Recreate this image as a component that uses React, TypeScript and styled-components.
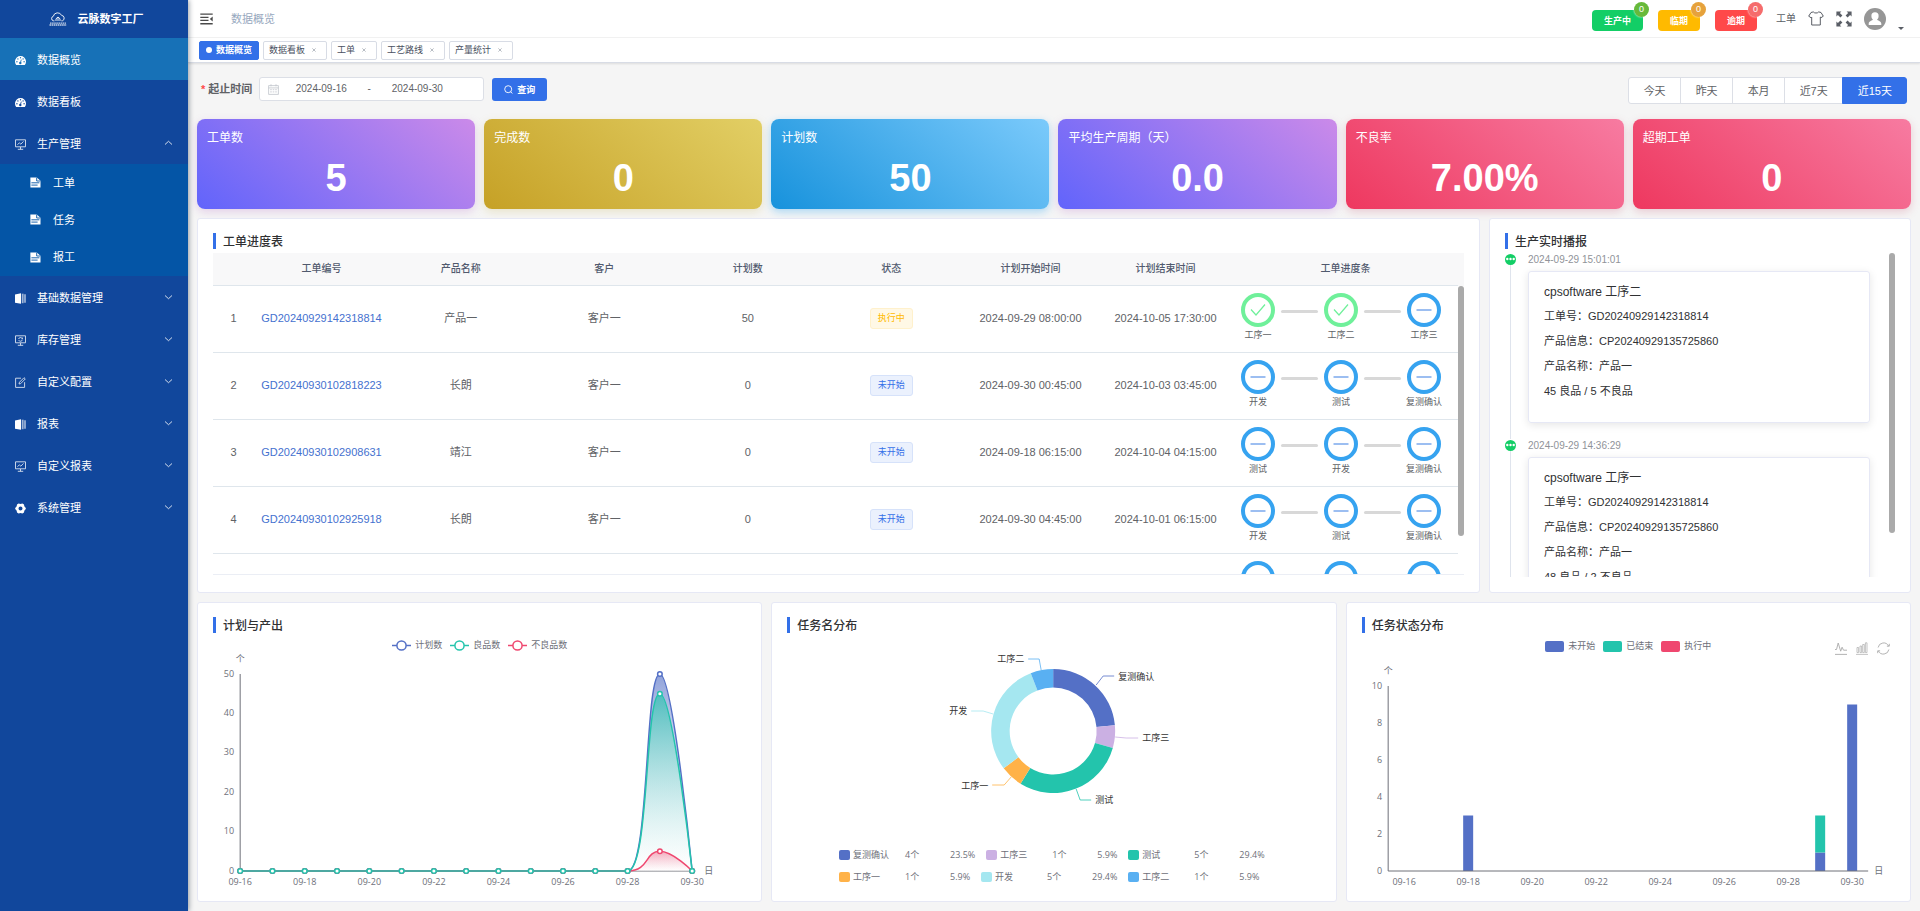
import React, { useState } from 'react';
import styled, { createGlobalStyle, css } from 'styled-components';

const GlobalStyle = createGlobalStyle`
  *, *::before, *::after { box-sizing: border-box; }
  body {
    margin: 0;
    background: #f5f5f5;
    color: #303133;
    font-family: "Liberation Sans", "Noto Sans CJK SC", sans-serif;
    font-size: 11px;
    line-height: 16px;
  }
  button, input { font: inherit; color: inherit; }
  button { cursor: pointer; }
  a { text-decoration: none; color: inherit; }
`;

const CHART_FONT = '"Open Sans", "Noto Sans CJK SC", sans-serif';

/* ---------- shell ---------- */

const Shell = styled.div`
  display: grid;
  grid-template-columns: 188px minmax(0, 1fr);
  min-height: 100vh;
`;

const Sidebar = styled.aside`
  position: relative;
  z-index: 2;
  background: #11479c;
  color: #fff;
  box-shadow: 1px 0 5px rgba(0, 21, 41, 0.4);
`;

const Brand = styled.div`
  display: flex;
  align-items: center;
  justify-content: center;
  gap: 11px;
  height: 38px;
  padding-left: 4px;
  font-size: 11px;
  font-weight: 700;
`;

const MenuRow = styled.a<{ $active?: boolean }>`
  display: flex;
  align-items: center;
  gap: 11px;
  height: 42px;
  padding: 2px 15px 0;
  background: ${(p) => (p.$active ? '#1771b7' : 'transparent')};
  svg { flex: none; }
`;

const MenuLabel = styled.span`
  flex: 1;
`;

const SubMenu = styled.div`
  display: grid;
  grid-auto-rows: 1fr;
  height: 112px;
  background: #0455a6;
`;

const SubRow = styled.a`
  display: flex;
  align-items: center;
  gap: 12px;
  padding-left: 30px;
`;

const Main = styled.div`
  display: flex;
  flex-direction: column;
  min-width: 0;
`;

const TopBar = styled.header`
  display: flex;
  align-items: center;
  height: 38px;
  padding: 0 16px 0 12px;
  background: #fff;
  border-bottom: 1px solid #f2f2f2;
`;

const PlainButton = styled.button`
  display: inline-flex;
  align-items: center;
  justify-content: center;
  padding: 0;
  border: 0;
  background: none;
`;

const Crumb = styled.span`
  flex: 1;
  margin-left: 18px;
  color: #97a8be;
`;

const AlertButton = styled.button<{ $color: string }>`
  position: relative;
  height: 21px;
  margin: 4px 15px 0 0;
  padding: 0 12px;
  border: 0;
  border-radius: 4px;
  background: ${(p) => p.$color};
  color: #fff;
  font-size: 9px;
  line-height: 20px;
  font-weight: 700;
`;

const Badge = styled.span<{ $color: string }>`
  position: absolute;
  top: -8px;
  right: -6px;
  width: 15px;
  height: 15px;
  border-radius: 8px;
  background: ${(p) => p.$color};
  box-shadow: 0 0 2px #fff;
  font-weight: 400;
  line-height: 14px;
  text-align: center;
`;

const Tools = styled.div`
  display: flex;
  align-items: center;
  gap: 12px;
  margin-left: 4px;
  color: #5a5e66;
  font-size: 10px;
`;

const Caret = styled.span`
  align-self: flex-end;
  border: 3px solid transparent;
  border-top-color: #5a5e66;
  border-bottom-width: 0;
`;

const TabBar = styled.nav`
  display: flex;
  align-items: center;
  gap: 4px;
  height: 25px;
  padding: 0 11px;
  background: #fff;
  border-bottom: 1px solid #d8dce5;
  box-shadow: 0 1px 2px rgba(0, 0, 0, 0.1);
`;

const Tab = styled.div<{ $active?: boolean }>`
  display: flex;
  align-items: center;
  height: 19px;
  padding: 0 6px 0 5px;
  border: 1px solid #d8dce5;
  border-radius: 2px;
  background: #fff;
  color: #495060;
  font-size: 9px;
  ${(p) =>
    p.$active &&
    css`
      padding: 0 6px;
      border-color: #3370e8;
      background: #3370e8;
      color: #fff;
      font-weight: 700;
    `}
`;

const TabDot = styled.i`
  width: 6px;
  height: 6px;
  margin-right: 4px;
  border-radius: 50%;
  background: #fff;
`;

const CloseButton = styled(PlainButton)`
  width: 12px;
  height: 12px;
  margin-left: 3px;
  color: #9aa0aa;
`;

const Content = styled.main`
  flex: 1;
  display: flex;
  flex-direction: column;
  gap: 9px;
  padding: 14px 9px 9px;
`;

/* ---------- filter row ---------- */

const FilterBar = styled.form`
  display: flex;
  align-items: flex-start;
  padding: 0 4px;
  margin-bottom: 6px;
`;

const FilterLabel = styled.label`
  margin-right: 7px;
  color: #606266;
  font-weight: 700;
  line-height: 24px;
  &::before {
    content: '*';
    margin-right: 3px;
    color: #ff4949;
  }
`;

const DateBox = styled.div`
  display: flex;
  align-items: center;
  width: 225px;
  height: 24px;
  margin-right: 8px;
  padding-left: 8px;
  border: 1px solid #dcdfe6;
  border-radius: 3px;
  background: #fff;
  color: #606266;
  font-size: 10px;
`;

const DateInput = styled.input`
  width: 84px;
  padding: 0;
  border: 0;
  outline: 0;
  background: none;
  text-align: center;
`;

const DateDash = styled.span`
  width: 12px;
  text-align: center;
`;

const QueryButton = styled.button`
  display: flex;
  align-items: center;
  gap: 4px;
  height: 23px;
  margin: 1px auto 0 0;
  padding: 0 12px;
  border: 0;
  border-radius: 3px;
  background: #3370e8;
  color: #fff;
  font-size: 9px;
  font-weight: 700;
`;

const RangeGroup = styled.div`
  display: flex;
`;

const RangeButton = styled.button<{ $active: boolean }>`
  height: 27px;
  margin-left: -1px;
  padding: 0 14px 0 15px;
  border: 1px solid ${(p) => (p.$active ? '#3370e8' : '#dcdfe6')};
  background: ${(p) => (p.$active ? '#3370e8' : '#fff')};
  color: ${(p) => (p.$active ? '#fff' : '#606266')};
  &:first-child { border-radius: 3px 0 0 3px; }
  &:last-child { border-radius: 0 3px 3px 0; }
`;

/* ---------- stat cards ---------- */

const Stats = styled.section`
  display: grid;
  grid-template-columns: repeat(6, minmax(0, 1fr));
  gap: 9px;
`;

const StatCard = styled.div<{ $from: string; $to: string; $shade: string }>`
  display: flex;
  flex-direction: column;
  height: 90px;
  padding: 11px 10px 0;
  border-radius: 8px;
  background: linear-gradient(40deg, ${(p) => p.$from}, ${(p) => p.$to});
  box-shadow: 0 3px 8px ${(p) => p.$shade};
  color: #fff;
`;

const StatLabel = styled.span`
  font-size: 12px;
`;

const StatValue = styled.strong`
  margin-top: 10px;
  font-size: 38px;
  line-height: 44px;
  text-align: center;
`;

/* ---------- panels ---------- */

const MiddleRow = styled.section`
  display: grid;
  grid-template-columns: minmax(0, 1283fr) minmax(0, 422fr);
  gap: 9px;
`;

const ChartRow = styled.section`
  display: grid;
  grid-template-columns: repeat(3, minmax(0, 1fr));
  gap: 9px;
`;

const Panel = styled.article`
  min-width: 0;
  padding: 14px 15px 9px;
  border: 1px solid #e6e8f5;
  border-radius: 3px;
  background: #fff;
`;

const PanelTitle = styled.h2`
  margin: 0 0 4px;
  padding: 2px 0 0 7px;
  border-left: 3px solid #3370e8;
  font-size: 12px;
  font-weight: 500;
  line-height: 14px;
`;

const TableFrame = styled.div`
  display: flex;
  height: 322px;
  margin-bottom: 8px;
  overflow: hidden;
  border-bottom: 1px solid #ebeef5;
`;

const TableBox = styled.div`
  flex: 1;
  min-width: 0;
`;

const OrderTable = styled.table`
  width: 100%;
  height: 368px;
  table-layout: fixed;
  border-spacing: 0;
  color: #606266;
  text-align: center;
  th, td { padding: 0; }
  th {
    height: 33px;
    border-bottom: 1px solid #dfe6ec;
    background: #f8f8f9;
    color: #515a6e;
    font-size: 10px;
    font-weight: 500;
  }
  td {
    height: 67px;
    padding-bottom: 2px;
    border-bottom: 1px solid #dfe6ec;
  }
`;

const OrderLink = styled.a`
  color: #4571cf;
`;

const ScrollTrack = styled.div<{ $top: number }>`
  flex: none;
  width: 6px;
  padding-top: ${(p) => p.$top}px;
  background: linear-gradient(#f8f8f9, #f8f8f9) top / 6px ${(p) => p.$top}px no-repeat;
`;

const Thumb = styled.div<{ $size: number }>`
  height: ${(p) => p.$size}px;
  border-radius: 3px;
  background: #aaa;
`;

const Tag = styled.span<{ $busy: boolean }>`
  display: inline-block;
  height: 21px;
  padding: 0 7px;
  border: 1px solid ${(p) => (p.$busy ? '#fff1cc' : '#d6e2fa')};
  border-radius: 3px;
  background: ${(p) => (p.$busy ? '#fff8e6' : '#ebf1fd')};
  color: ${(p) => (p.$busy ? '#ffba00' : '#3370e8')};
  font-size: 9px;
  line-height: 18px;
`;

const Steps = styled.ol`
  display: flex;
  margin: 0;
  padding: 0 0 0 8px;
  list-style: none;
  font-size: 9px;
`;

const Step = styled.li`
  display: grid;
  grid-template-columns: 34px 49px;
  align-items: center;
`;

const StepRing = styled.span<{ $done: boolean }>`
  display: grid;
  place-items: center;
  height: 34px;
  border: 4px solid ${(p) => (p.$done ? '#6ff09a' : '#36a3f0')};
  border-radius: 50%;
  color: ${(p) => (p.$done ? '#6ff09a' : '#5a93e8')};
`;

const StepBar = styled.i`
  height: 3px;
  margin: 2px 6px 0;
  border-radius: 2px;
  background: #d8d8d8;
`;

const StepName = styled.span`
  grid-column: 1;
  display: flex;
  justify-content: center;
  white-space: nowrap;
`;

/* ---------- timeline ---------- */

const FeedFrame = styled.div`
  display: flex;
  height: 324px;
  overflow: hidden;
`;

const Feed = styled.ul`
  flex: 1;
  margin: 0;
  padding: 0;
  list-style: none;
`;

const FeedItem = styled.li`
  display: grid;
  grid-template-columns: 11px minmax(0, 1fr);
  column-gap: 12px;
  height: 186px;
`;

const FeedRail = styled.div`
  display: flex;
  flex-direction: column;
  align-items: center;
  padding-top: 1px;
  &::after {
    content: '';
    flex: 1;
    width: 1px;
    background: #dfe4ed;
  }
`;

const FeedTime = styled.time`
  display: block;
  margin-bottom: 5px;
  color: #909399;
  font-size: 10px;
  line-height: 13px;
`;

const FeedCard = styled.div`
  height: 152px;
  margin-right: 19px;
  padding: 8px 15px;
  border: 1px solid #e6e8f5;
  border-radius: 3px;
  box-shadow: 0 2px 9px rgba(0, 0, 0, 0.1);
`;

const FeedTitle = styled.h3`
  margin: 0;
  font-size: 12px;
  font-weight: 400;
  line-height: 24px;
`;

const FeedText = styled.p`
  margin: 0;
  line-height: 25px;
`;

/* ---------- charts ---------- */

const ChartHead = styled.div`
  display: grid;
  grid-template-columns: 1fr auto 1fr;
  align-items: center;
  height: 16px;
`;

const Legend = styled.ul`
  grid-column: 2;
  display: flex;
  gap: 8px;
  margin: 0;
  padding: 0;
  list-style: none;
  color: #6e7079;
  font-family: ${CHART_FONT};
  font-size: 9px;
  line-height: 12px;
`;

const LegendItem = styled.li`
  display: flex;
  align-items: center;
  gap: 4px;
`;

const Swatch = styled.i<{ $color: string; $wide?: boolean }>`
  width: ${(p) => (p.$wide ? 19 : 11)}px;
  height: ${(p) => (p.$wide ? 11 : 10)}px;
  border-radius: 2px;
  background: ${(p) => p.$color};
`;

const Toolbox = styled.div`
  display: flex;
  justify-content: flex-end;
  gap: 9px;
  padding: 5px 5px 0 0;
  color: #aaa;
`;

const Chart = styled.svg`
  display: block;
  width: 100%;
  font-family: ${CHART_FONT};
  font-size: 9px;
`;

const ShareLegend = styled.ul`
  display: grid;
  gap: 10px;
  width: 430px;
  margin: 9px auto;
  padding: 0;
  list-style: none;
  color: #6e7079;
  font-family: ${CHART_FONT};
  font-size: 9px;
  line-height: 12px;
`;

const ShareLine = styled.li`
  display: flex;
  gap: 11px;
`;

const ShareItem = styled.span`
  display: grid;
  grid-template-columns: 11px 53px 45px auto;
  align-items: center;
  & > :nth-child(2) { padding-left: 3px; }
  & > :nth-child(3) { padding-left: 2px; }
  & > :nth-child(4) { padding-left: 2px; }
`;

/* ---------- icons ---------- */

const stroke = { fill: 'none', stroke: 'currentColor' } as const;

const LogoIcon = () => (
  <svg width="18" height="14" viewBox="0 0 18 14" {...stroke} strokeWidth="0.9" aria-hidden="true">
    <path d="M5.4 8.8H4.6A2.3 2.3 0 0 1 4.3 4.3 4.4 4.4 0 0 1 12.6 3.4 2.8 2.8 0 0 1 13.4 8.8h-1" />
    <path d="M9 9V5M7 9V6.8L9 5l2 1.8V9" />
    <path d="M1 11.2h16M0.5 13h17" strokeDasharray="1.6 0.5" strokeWidth="1.3" opacity="0.75" />
  </svg>
);

const GaugeIcon = ({ hole }: { hole: string }) => (
  <svg width="11" height="11" viewBox="0 0 11 11" aria-hidden="true">
    <path d="M1.2 9.900A5.500 5.500 0 1 1 9.800 9.900z" fill="#fff" />
    <g fill={hole}>
      <circle cx="1.900" cy="6.700" r="0.700" />
      <circle cx="2.900" cy="3.900" r="0.700" />
      <circle cx="5.500" cy="2.700" r="0.700" />
      <circle cx="8.100" cy="3.900" r="0.700" />
      <circle cx="9.100" cy="6.700" r="0.700" />
      <circle cx="5.300" cy="8" r="1.200" />
    </g>
    <path d="M5.400 7.800 6.300 4.600" stroke={hole} strokeWidth="0.800" />
  </svg>
);

const BoardIcon = ({ sync }: { sync?: boolean }) => (
  <svg width="11" height="11" viewBox="0 0 11 11" {...stroke} strokeWidth="0.9" opacity="0.85" aria-hidden="true">
    <path d="M0.5 0.8h10v7h-10zM5.5 8v2.3M2.8 10.3h5.4" />
    {sync ? <path d="M7.3 3.6a2 2 0 0 0-3.7.4M3.7 5.2a2 2 0 0 0 3.7-.4M7.5 2.6v1.2H6.4" /> : <path d="M2.5 5.7 4.4 3.8l1.4 1.4 2.7-2.8" />}
  </svg>
);

const BookIcon = () => (
  <svg width="11" height="11" viewBox="0 0 11 11" fill="currentColor" aria-hidden="true">
    <path d="M0 1.4 6 .3v10.4L0 9.7z" />
    <path d="M6.800.7h1.800v9.500H6.800z" opacity="0.6" />
    <path d="M9 1.2h2v8.500H9z" opacity="0.500" />
  </svg>
);

const EditIcon = () => (
  <svg width="11" height="11" viewBox="0 0 11 11" {...stroke} strokeWidth="0.9" opacity="0.85" aria-hidden="true">
    <path d="M6 1.2H.6v9.2h9V5.2M4 7l.5-1.8L9 .7l1.3 1.2L5.7 6.6z" />
  </svg>
);

const GearIcon = () => (
  <svg width="11" height="11" viewBox="0 0 11 11" fill="currentColor" aria-hidden="true">
    <path
      fillRule="evenodd"
      d="M3.6.4 5.5 1 7.4.4l1.6 1 .3 1.9L10.8 5v1L9.3 7.700 9 9.600l-1.600 1L5.500 10l-1.900.6-1.600-1-.3-1.900L.2 6V5l1.500-1.700L2 1.400zM5.500 3.500a2 2 0 1 0 0 4 2 2 0 0 0 0-4z"
    />
  </svg>
);

const DocIcon = () => (
  <svg width="11" height="11" viewBox="0 0 11 11" aria-hidden="true">
    <path fill="#fff" d="M.4.4h6.400l3.700 3.400v6.700H.4z" />
    <path d="M6.700.6v3.400h3.600M1.400 5.800h8M1.400 8.100h6.200" fill="none" stroke="#0455a6" strokeWidth="0.9" />
  </svg>
);

const Chevron = ({ up }: { up?: boolean }) => (
  <svg width="9" height="9" viewBox="0 0 9 9" {...stroke} strokeWidth="0.900" opacity="0.900" aria-hidden="true">
    <path d={up ? 'M1 4.500 4.500 1.300 8 4.500' : 'M1 1.500l3.500 3.200L8 1.500'} />
  </svg>
);

const FoldIcon = () => (
  <svg width="13" height="12" viewBox="0 0 13 12" fill="#4a4a4a" aria-hidden="true">
    <path d="M.3.400h12.400v1.400H.3zM.3 3.700h8.200v1.200H.3zM.3 6.800h8.200V8H.3zM.3 10h12.400v1.400H.3zM12.700 3.400v5L9.800 5.900z" />
  </svg>
);

const ShirtIcon = () => (
  <svg width="16" height="15" viewBox="0 0 16 15" {...stroke} strokeWidth="1" strokeLinejoin="round" aria-hidden="true">
    <path d="M5.300.9c.8 1.500 4.600 1.500 5.400 0L13 1.500l2.300 3.700-2.300 1.500-.7-.7v8H3.700V6l-.7.7L.7 5.200 3 1.500z" />
  </svg>
);

const FullscreenIcon = () => (
  <svg width="16" height="16" viewBox="0 0 16 16" fill="currentColor" aria-hidden="true">
    <path d="M.4.4h5L3.900 1.900l2.500 2.500-2 2-2.500-2.500L.4 5.400zM15.600.4v5l-1.500-1.500-2.500 2.500-2-2 2.500-2.500L10.600.4zM.4 15.600v-5l1.500 1.500 2.500-2.500 2 2-2.500 2.500 1.500 1.500zM15.600 15.600h-5l1.500-1.500-2.500-2.500 2-2 2.500 2.500 1.500-1.500z" />
  </svg>
);

const AvatarIcon = () => (
  <svg width="22" height="22" viewBox="0 0 22 22" aria-hidden="true">
    <circle cx="11" cy="11" r="11" fill="#969696" />
    <path
      d="M11 4.200a3.600 3.600 0 0 1 3.600 3.700c0 1.700-.7 2.900-1.600 3.600.3 1 4.300 1.300 4.300 4.300v1.100H4.700v-1.100c0-3 4-3.300 4.300-4.300-.9-.7-1.600-1.900-1.600-3.600A3.600 3.600 0 0 1 11 4.200z"
      fill="#fff"
    />
  </svg>
);

const CalendarIcon = () => (
  <svg width="11" height="11" viewBox="0 0 11 11" {...stroke} strokeWidth="0.8" color="#c0c4cc" aria-hidden="true">
    <path d="M.6 1.600h9.800v8.800H.6zM.6 3.900h9.800M3 .3v2M8 .3v2M2.200 5.700h1.600M4.700 5.700h1.600M7.200 5.700h1.600M2.200 7.900h1.600M4.700 7.900h1.600M7.200 7.900h1.600" />
  </svg>
);

const SearchIcon = () => (
  <svg width="9" height="9" viewBox="0 0 9 9" {...stroke} strokeWidth="0.9" aria-hidden="true">
    <circle cx="4.200" cy="4.200" r="3.500" />
    <path d="m6.700 6.700 1.600 1.800" />
  </svg>
);

const CloseIcon = () => (
  <svg width="4" height="4" viewBox="0 0 4 4" {...stroke} strokeWidth="0.7" aria-hidden="true">
    <path d="M.4.4l3.200 3.200M3.600.4.4 3.600" />
  </svg>
);

const StepMark = ({ done }: { done: boolean }) => (
  <svg width="16" height="14" viewBox="0 0 16 14" {...stroke} strokeWidth="1.200" aria-hidden="true">
    <path d={done ? 'M1 6.500l5 5.500L15 1.500' : 'M.5 7h15'} />
  </svg>
);

const FeedDot = () => (
  <svg width="11" height="11" viewBox="0 0 11 11" aria-hidden="true">
    <circle cx="5.500" cy="5.500" r="5.500" fill="#13ce66" />
    <g fill="#fff">
      <circle cx="2.300" cy="5" r="1.200" />
      <circle cx="5.500" cy="5" r="1.200" />
      <circle cx="8.700" cy="5" r="1.200" />
    </g>
  </svg>
);

/* ---------- data ---------- */

const menuTop = [
  { name: '数据概览', icon: <GaugeIcon hole="#1771b7" />, active: true },
  { name: '数据看板', icon: <GaugeIcon hole="#11479c" /> },
];
const menuBottom = [
  { name: '基础数据管理', icon: <BookIcon /> },
  { name: '库存管理', icon: <BoardIcon sync /> },
  { name: '自定义配置', icon: <EditIcon /> },
  { name: '报表', icon: <BookIcon /> },
  { name: '自定义报表', icon: <BoardIcon /> },
  { name: '系统管理', icon: <GearIcon /> },
];

const alerts = [
  { name: '生产中', color: '#13ce66', badge: '#67b93a' },
  { name: '临期', color: '#ffba00', badge: '#e6a23c' },
  { name: '逾期', color: '#ff4949', badge: '#f56c6c' },
];

const ranges = ['今天', '昨天', '本月', '近7天', '近15天'];

const purple = { $from: '#6164fb', $to: '#cb8ae9', $shade: 'rgba(180, 100, 200, 0.25)' };
const gold = { $from: '#c6a126', $to: '#e2cf65', $shade: 'rgba(200, 180, 80, 0.25)' };
const blue = { $from: '#1792dc', $to: '#7bcafb', $shade: 'rgba(60, 170, 240, 0.4)' };
const red = { $from: '#ee385f', $to: '#f77ba1', $shade: 'rgba(200, 80, 110, 0.25)' };

const stats = [
  { name: '工单数', value: '5', tone: purple },
  { name: '完成数', value: '0', tone: gold },
  { name: '计划数', value: '50', tone: blue },
  { name: '平均生产周期（天）', value: '0.0', tone: purple },
  { name: '不良率', value: '7.00%', tone: red },
  { name: '超期工单', value: '0', tone: red },
];

const orders = [
  { no: 'GD20240929142318814', product: '产品一', plan: 50, busy: true, start: '2024-09-29 08:00:00', end: '2024-10-05 17:30:00', steps: ['工序一', '工序二', '工序三'], done: 2 },
  { no: 'GD20240930102818223', product: '长朗', plan: 0, busy: false, start: '2024-09-30 00:45:00', end: '2024-10-03 03:45:00', steps: ['开发', '测试', '复测确认'], done: 0 },
  { no: 'GD20240930102908631', product: '靖江', plan: 0, busy: false, start: '2024-09-18 06:15:00', end: '2024-10-04 04:15:00', steps: ['测试', '开发', '复测确认'], done: 0 },
  { no: 'GD20240930102925918', product: '长朗', plan: 0, busy: false, start: '2024-09-30 04:45:00', end: '2024-10-01 06:15:00', steps: ['开发', '测试', '复测确认'], done: 0 },
  { no: '', product: '', plan: 0, busy: false, start: '', end: '', steps: ['', '', ''], done: 0 },
];

const feed = [
  { time: '2024-09-29 15:01:01', step: '工序二', result: '45 良品 / 5 不良品' },
  { time: '2024-09-29 14:36:29', step: '工序一', result: '48 良品 / 2 不良品' },
];

const shares = [
  { name: '复测确认', count: 4, pct: '23.5%', color: '#5470c6', line: '43,-46 50,-55 61,-55', x: 65, y: -55 },
  { name: '工序三', count: 1, pct: '5.9%', color: '#cbb0e3', line: '62,6 73,7 85,7', x: 89, y: 6 },
  { name: '测试', count: 5, pct: '29.4%', color: '#23c4ac', line: '23,58 27,69 38,69', x: 42, y: 68 },
  { name: '工序一', count: 1, pct: '5.9%', color: '#ffb248', line: '-42,46 -49,54 -61,54', x: -65, y: 54 },
  { name: '开发', count: 5, pct: '29.4%', color: '#a5e7f0', line: '-60,-17 -70,-20 -82,-20', x: -86, y: -21 },
  { name: '工序二', count: 1, pct: '5.9%', color: '#59b0f2', line: '-12,-61 -14,-72 -25,-72', x: -29, y: -73 },
];

const days = Array.from({ length: 15 }, (_, i) => `09-${16 + i}`);

/* ---------- chart drawings ---------- */

const AXIS = '#6e7079';

const OutputChart = () => {
  const left = 27;
  const base = 218;
  const step = 452 / 14;
  const y = (v: number) => base - (v * 197) / 50;
  const x = (i: number) => left + i * step;
  const curve = (v: number) =>
    `M${left} ${base}H${x(12)}C${x(12) + 22} ${base} ${x(12) + 17} ${y(v)} ${x(13)} ${y(v)}C${x(13) + 13} ${y(v)} ${x(14)} ${base} ${x(14)} ${base}`;
  const series = [
    { id: 'plan', v: 50, color: '#5470c6' },
    { id: 'good', v: 45, color: '#23c4ac' },
    { id: 'bad', v: 5, color: '#ef476f' },
  ];
  return (
    <Chart height={238} viewBox="0 0 533 238" role="img" aria-label="计划与产出">
      <defs>
        {series.map((s) => (
          <linearGradient key={s.id} id={`fill-${s.id}`} x1="0" y1="0" x2="0" y2="1">
            <stop offset="0" stopColor={s.color} stopOpacity={s.id === 'bad' ? 0.45 : 0.65} />
            <stop offset="1" stopColor="#fff" stopOpacity={s.id === 'plan' ? 0.1 : 0.3} />
          </linearGradient>
        ))}
      </defs>
      <path d={`M${left} ${y(50)}V${base}H${x(14)}`} fill="none" stroke={AXIS} />
      <g fill={AXIS} dominantBaseline="central">
        <text x={left} y={5} textAnchor="middle">个</text>
        <text x={x(14) + 12} y={217}>日</text>
        {[0, 10, 20, 30, 40, 50].map((v) => (
          <text key={v} x={left - 6} y={y(v) - 1} textAnchor="end">{v}</text>
        ))}
        {days.map((d, i) => (i % 2 === 0 ? <text key={d} x={x(i)} y={228} textAnchor="middle">{d}</text> : null))}
      </g>
      {series.map((s) => (
        <path key={s.id} d={curve(s.v)} fill={`url(#fill-${s.id})`} />
      ))}
      {[series[0], series[2], series[1]].map((s) => (
        <g key={s.id} stroke={s.color} strokeWidth="1.500">
          <path d={curve(s.v)} fill="none" />
          {days.map((d, i) => (
            <circle key={d} cx={x(i)} cy={i === 13 ? y(s.v) : base} r="2.300" fill="#fff" />
          ))}
        </g>
      ))}
    </Chart>
  );
};

const ShareChart = () => {
  const total = shares.reduce((sum, s) => sum + s.count, 0);
  const point = (turn: number, r: number) =>
    `${(Math.sin(turn * 2 * Math.PI) * r).toFixed(2)} ${(-Math.cos(turn * 2 * Math.PI) * r).toFixed(2)}`;
  let acc = 0;
  return (
    <Chart height={203} viewBox="0 0 533 203" role="img" aria-label="任务名分布">
      <g transform="translate(266 94)">
        {shares.map((s) => {
          const a = acc / total;
          acc += s.count;
          const b = acc / total;
          return (
            <g key={s.name}>
              <path d={`M${point(a, 62)}A62 62 0 0 1 ${point(b, 62)}L${point(b, 43.500)}A43.500 43.500 0 0 0 ${point(a, 43.500)}Z`} fill={s.color} />
              <polyline points={s.line} fill="none" stroke={s.color} strokeWidth="0.8" />
              <text x={s.x} y={s.y} fill="#333" dominantBaseline="central" textAnchor={s.x > 0 ? 'start' : 'end'}>{s.name}</text>
            </g>
          );
        })}
      </g>
    </Chart>
  );
};

const StatusChart = () => {
  const left = 26;
  const base = 218;
  const y = (v: number) => base - v * 18.500;
  const x = (i: number) => left + 16 + i * 32;
  const bars = [
    { day: 2, from: 0, to: 3, color: '#5470c6' },
    { day: 13, from: 0, to: 1, color: '#5470c6' },
    { day: 13, from: 1, to: 3, color: '#23c4ac' },
    { day: 14, from: 0, to: 9, color: '#5470c6' },
  ];
  return (
    <Chart height={238} viewBox="0 0 533 238" role="img" aria-label="任务状态分布">
      {bars.map((b) => (
        <rect key={`${b.day}-${b.from}`} x={x(b.day) - 5} y={y(b.to)} width="10" height={y(b.from) - y(b.to)} fill={b.color} />
      ))}
      <path d={`M${left} ${y(10)}V${base}H506`} fill="none" stroke={AXIS} />
      <g fill={AXIS} dominantBaseline="central">
        <text x={left} y={17} textAnchor="middle">个</text>
        <text x={512} y={217}>日</text>
        {[0, 2, 4, 6, 8, 10].map((v) => (
          <text key={v} x={left - 6} y={y(v) - 1} textAnchor="end">{v}</text>
        ))}
        {days.map((d, i) => (i % 2 === 0 ? <text key={d} x={x(i)} y={228} textAnchor="middle">{d}</text> : null))}
      </g>
    </Chart>
  );
};

const LineMark = ({ color }: { color: string }) => (
  <svg width="19" height="11" viewBox="0 0 19 11" stroke={color} strokeWidth="1.500" fill="#fff" aria-hidden="true">
    <path d="M0 5.500h19" />
    <circle cx="9.500" cy="5.500" r="4.600" />
  </svg>
);

/* ---------- page ---------- */

export default function App() {
  const [range, setRange] = useState('近15天');
  return (
    <>
      <GlobalStyle />
      <Shell>
        <Sidebar>
          <Brand><LogoIcon />云脉数字工厂</Brand>
          {menuTop.map((m) => (
            <MenuRow key={m.name} href="#" $active={m.active}>{m.icon}<MenuLabel>{m.name}</MenuLabel></MenuRow>
          ))}
          <MenuRow href="#"><BoardIcon /><MenuLabel>生产管理</MenuLabel><Chevron up /></MenuRow>
          <SubMenu>
            {['工单', '任务', '报工'].map((name) => (
              <SubRow key={name} href="#"><DocIcon />{name}</SubRow>
            ))}
          </SubMenu>
          {menuBottom.map((m) => (
            <MenuRow key={m.name} href="#">{m.icon}<MenuLabel>{m.name}</MenuLabel><Chevron /></MenuRow>
          ))}
        </Sidebar>

        <Main>
          <TopBar>
            <PlainButton type="button" aria-label="收起菜单"><FoldIcon /></PlainButton>
            <Crumb>数据概览</Crumb>
            {alerts.map((a) => (
              <AlertButton key={a.name} type="button" $color={a.color}>
                {a.name}<Badge $color={a.badge}>0</Badge>
              </AlertButton>
            ))}
            <Tools>
              <a href="#">工单</a>
              <PlainButton type="button" aria-label="主题"><ShirtIcon /></PlainButton>
              <PlainButton type="button" aria-label="全屏"><FullscreenIcon /></PlainButton>
              <PlainButton type="button" aria-label="用户"><AvatarIcon /></PlainButton>
              <Caret />
            </Tools>
          </TopBar>

          <TabBar>
            <Tab $active><TabDot />数据概览</Tab>
            {['数据看板', '工单', '工艺路线', '产量统计'].map((name) => (
              <Tab key={name}>
                {name}
                <CloseButton type="button" aria-label={`关闭${name}`}><CloseIcon /></CloseButton>
              </Tab>
            ))}
          </TabBar>

          <Content>
            <FilterBar onSubmit={(e) => e.preventDefault()}>
              <FilterLabel htmlFor="date-from">起止时间</FilterLabel>
              <DateBox>
                <CalendarIcon />
                <DateInput id="date-from" defaultValue="2024-09-16" />
                <DateDash>-</DateDash>
                <DateInput aria-label="结束日期" defaultValue="2024-09-30" />
              </DateBox>
              <QueryButton type="submit"><SearchIcon />查询</QueryButton>
              <RangeGroup>
                {ranges.map((r) => (
                  <RangeButton key={r} type="button" $active={r === range} aria-pressed={r === range} onClick={() => setRange(r)}>{r}</RangeButton>
                ))}
              </RangeGroup>
            </FilterBar>

            <Stats>
              {stats.map((s) => (
                <StatCard key={s.name} {...s.tone}>
                  <StatLabel>{s.name}</StatLabel>
                  <StatValue>{s.value}</StatValue>
                </StatCard>
              ))}
            </Stats>

            <MiddleRow>
              <Panel>
                <PanelTitle>工单进度表</PanelTitle>
                <TableFrame>
                  <TableBox>
                    <OrderTable>
                      <colgroup>
                        <col width="41" />
                        <col width="135" />
                        <col /><col /><col /><col />
                        <col width="135" />
                        <col width="135" />
                        <col width="225" />
                      </colgroup>
                      <thead>
                        <tr>
                          <th />
                          {['工单编号', '产品名称', '客户', '计划数', '状态', '计划开始时间', '计划结束时间', '工单进度条'].map((h) => (
                            <th key={h} scope="col">{h}</th>
                          ))}
                        </tr>
                      </thead>
                      <tbody>
                        {orders.map((o, i) => (
                          <tr key={o.no || 'next'}>
                            <td>{o.no && i + 1}</td>
                            <td>{o.no && <OrderLink href="#">{o.no}</OrderLink>}</td>
                            <td>{o.product}</td>
                            <td>{o.no && '客户一'}</td>
                            <td>{o.no && o.plan}</td>
                            <td>{o.no && <Tag $busy={o.busy}>{o.busy ? '执行中' : '未开始'}</Tag>}</td>
                            <td>{o.start}</td>
                            <td>{o.end}</td>
                            <td>
                              <Steps>
                                {o.steps.map((name, n) => (
                                  <Step key={n}>
                                    <StepRing $done={n < o.done}><StepMark done={n < o.done} /></StepRing>
                                    {n < 2 && <StepBar />}
                                    <StepName>{name || '\u00a0'}</StepName>
                                  </Step>
                                ))}
                              </Steps>
                            </td>
                          </tr>
                        ))}
                      </tbody>
                    </OrderTable>
                  </TableBox>
                  <ScrollTrack $top={33}><Thumb $size={250} /></ScrollTrack>
                </TableFrame>
              </Panel>

              <Panel>
                <PanelTitle>生产实时播报</PanelTitle>
                <FeedFrame>
                  <Feed>
                    {feed.map((f) => (
                      <FeedItem key={f.time}>
                        <FeedRail><FeedDot /></FeedRail>
                        <div>
                          <FeedTime>{f.time}</FeedTime>
                          <FeedCard>
                            <FeedTitle>cpsoftware {f.step}</FeedTitle>
                            <FeedText>工单号：GD20240929142318814</FeedText>
                            <FeedText>产品信息：CP20240929135725860</FeedText>
                            <FeedText>产品名称：产品一</FeedText>
                            <FeedText>{f.result}</FeedText>
                          </FeedCard>
                        </div>
                      </FeedItem>
                    ))}
                  </Feed>
                  <ScrollTrack $top={0}><Thumb $size={280} /></ScrollTrack>
                </FeedFrame>
              </Panel>
            </MiddleRow>

            <ChartRow>
              <Panel>
                <PanelTitle>计划与产出</PanelTitle>
                <ChartHead>
                  <Legend>
                    <LegendItem><LineMark color="#5470c6" />计划数</LegendItem>
                    <LegendItem><LineMark color="#23c4ac" />良品数</LegendItem>
                    <LegendItem><LineMark color="#ef476f" />不良品数</LegendItem>
                  </Legend>
                </ChartHead>
                <OutputChart />
              </Panel>

              <Panel>
                <PanelTitle>任务名分布</PanelTitle>
                <ShareChart />
                <ShareLegend>
                  {[shares.slice(0, 3), shares.slice(3)].map((line, n) => (
                    <ShareLine key={n}>
                      {line.map((s) => (
                        <ShareItem key={s.name}>
                          <Swatch $color={s.color} />
                          <span>{s.name}</span>
                          <span>{s.count}个</span>
                          <span>{s.pct}</span>
                        </ShareItem>
                      ))}
                    </ShareLine>
                  ))}
                </ShareLegend>
              </Panel>

              <Panel>
                <PanelTitle>任务状态分布</PanelTitle>
                <ChartHead>
                  <Legend>
                    <LegendItem><Swatch $wide $color="#5470c6" />未开始</LegendItem>
                    <LegendItem><Swatch $wide $color="#23c4ac" />已结束</LegendItem>
                    <LegendItem><Swatch $wide $color="#ef476f" />执行中</LegendItem>
                  </Legend>
                  <Toolbox>
                    <PlainButton type="button" aria-label="切换为折线图">
                      <svg width="12" height="13" viewBox="0 0 12 13" {...stroke} strokeWidth="0.9">
                        <path d="M0 7.500h1.500L3.200 1l2.500 8.200 1.400-4 1.400 3H12M0 12.400h12" />
                      </svg>
                    </PlainButton>
                    <PlainButton type="button" aria-label="切换为柱状图">
                      <svg width="12" height="13" viewBox="0 0 12 13" {...stroke} strokeWidth="0.7">
                        <path d="M1 10.600V5.500h1.600v5.100zM4 10.600V4h1.600v6.600zM6.700 10.600V2.500h1.600v8.100zM9.400 10.600V.8H11v9.800zM0 12.400h12" />
                      </svg>
                    </PlainButton>
                    <PlainButton type="button" aria-label="还原">
                      <svg width="13" height="13" viewBox="0 0 13 13" {...stroke} strokeWidth="0.9">
                        <path d="M1.100 5.500A5.600 5.600 0 0 1 11.600 4M11.900 7.500A5.600 5.600 0 0 1 1.400 9M12.300 1.800v2.400H9.900M.7 11.200V8.800h2.400" />
                      </svg>
                    </PlainButton>
                  </Toolbox>
                </ChartHead>
                <StatusChart />
              </Panel>
            </ChartRow>
          </Content>
        </Main>
      </Shell>
    </>
  );
}
